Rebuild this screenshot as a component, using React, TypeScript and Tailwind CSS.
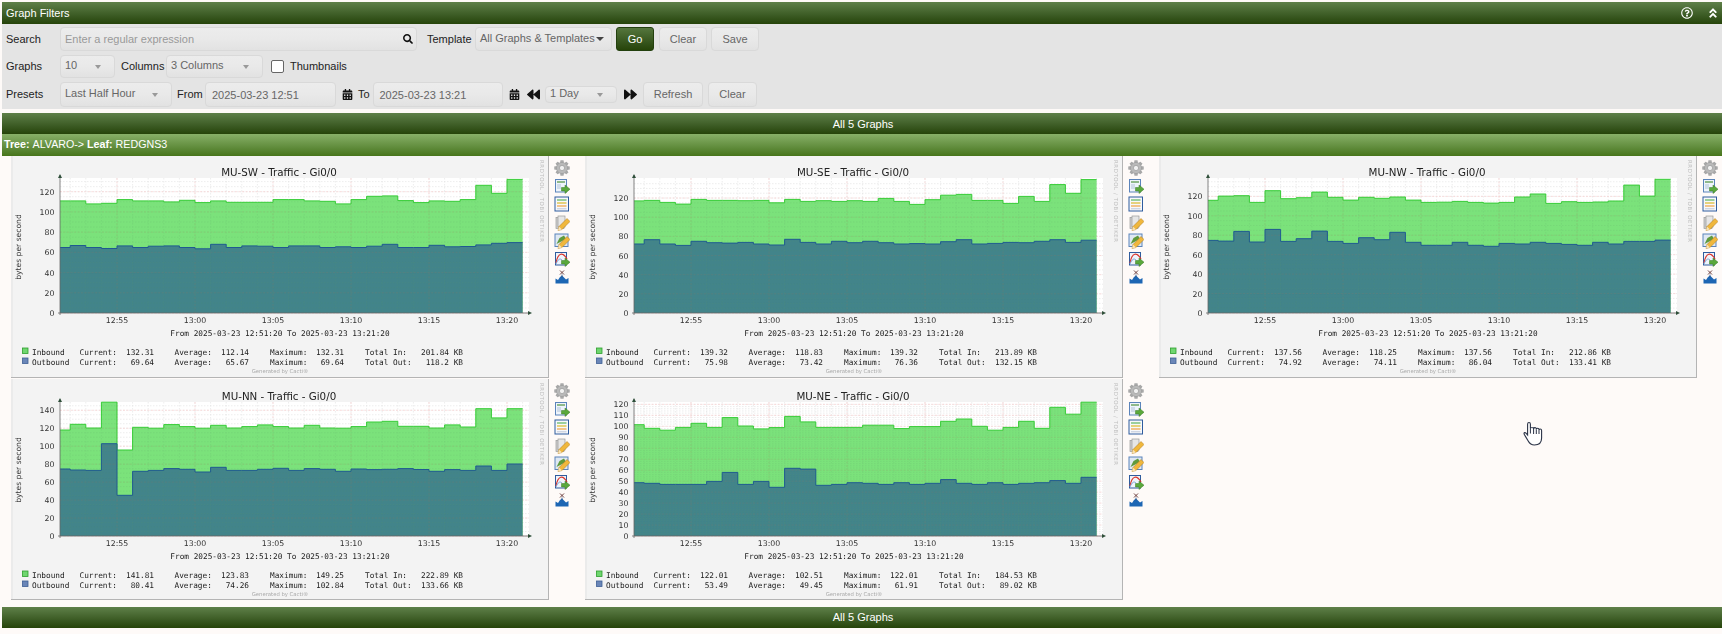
import React, { useId } from "react";
import { FaSearch, FaCalendarAlt, FaBackward, FaForward, FaRegQuestionCircle, FaAngleDoubleUp } from "react-icons/fa";

type G = {
  title: string; max: number; step: number; minor: number; scale: number; top: number;
  inb: number[]; out: number[];
  i: [string, string, string, string]; o: [string, string, string, string];
};

const graphs: G[] = [
  {
    title: "MU-SW - Traffic - Gi0/0", max: 133.6, step: 20, minor: 5, scale: 1.0108, top: 22,
    inb: [110.9,110.9,107.9,108.5,112.2,110.9,110.9,109.9,111.5,109.2,110.9,109.5,109.5,109.5,112.2,112.2,110.9,110.5,107.9,112.2,115.5,115.8,111.2,109.2,110.9,110.5,112.2,126.3,118.4,132.2],
    out: [64.8,66.8,64.8,63.8,66.4,64.8,66.1,66.4,64.8,63.5,68,64.8,66.4,66.1,64.8,66.4,66.4,64.8,65.5,64.8,66.1,68,64.8,64.8,67,65.5,65.8,67.4,69,69.6],
    i: ["132.31", "112.14", "132.31", "201.84 KB"], o: ["69.64", "65.67", "69.64", "118.2 KB"],
  },
  {
    title: "MU-SE - Traffic - Gi0/0", max: 140, step: 20, minor: 5, scale: 0.958, top: 22,
    inb: [117,117.5,115.5,113.7,118.6,117.5,117.5,117.2,117.5,115,118.6,116.5,117.2,116.5,117.2,116.5,119.6,116.5,113.4,118.3,123,123.8,117.5,117.5,114.4,121.7,116.5,134,124.9,139.3],
    out: [72,76.5,72,70.6,74.8,73.4,73,73.7,72,71,76.9,73.7,72,74.8,73.4,74.8,73.4,72,72.4,72,74.4,76.5,72,72.7,73.7,73.4,74.8,76.5,73.7,76],
    i: ["139.32", "118.83", "139.32", "213.89 KB"], o: ["75.98", "73.42", "76.36", "132.15 KB"],
  },
  {
    title: "MU-NW - Traffic - Gi0/0", max: 138, step: 20, minor: 5, scale: 0.972, top: 22,
    inb: [115.9,120.3,120.7,113.8,125.8,117.6,118.6,124.4,119,116.2,119,118,119.3,116.2,113.8,114,114.8,113.8,113.1,113.8,119.3,122.4,112.8,114.5,113.8,114.2,115.2,131.6,120.3,137.5],
    out: [74.7,74,84,73,86,73.7,76.4,84.3,73.7,71.6,77.5,75.4,83,72.7,69.6,69.6,72.7,69.6,68.6,71.6,71,72.7,71.6,70.6,69.6,72.7,71,73.7,73.7,75],
    i: ["137.56", "118.25", "137.56", "212.86 KB"], o: ["74.92", "74.11", "86.04", "133.41 KB"],
  },
  {
    title: "MU-NN - Traffic - Gi0/0", max: 150, step: 20, minor: 5, scale: 0.898, top: 23,
    inb: [118,124.4,120.3,149,95.8,121,120,124,121.8,120,123.3,120.3,121.8,123.7,121.8,120.3,123.3,120.3,120,121.8,127,127.7,122.2,122.2,120.3,123.7,121.4,141.8,131.5,141.8],
    out: [74.6,73.5,73,102.8,45.3,72,73,75,74.3,71.3,76.5,73,73,74.3,75.4,73,75,74.3,72,74.6,73.9,74.3,75,74,72,73.9,73,78,73,80.2],
    i: ["141.81", "123.83", "149.25", "222.89 KB"], o: ["80.41", "74.26", "102.84", "133.66 KB"],
  },
  {
    title: "MU-NE - Traffic - Gi0/0", max: 122, step: 10, minor: 2, scale: 1.097, top: 23,
    inb: [101.5,98.2,96.4,99,102.7,99,107.9,100.3,97.6,98.8,109,104,99,99,99,101,101,97.9,99.7,99.7,104.6,106.7,100,96.4,99,104.6,98.2,117.3,111,122],
    out: [48.6,48,47,47,47,49.8,58,47,49.8,44.4,61.7,61,46.2,47,48.6,48,47,48.6,47,48,51.4,48,47,48.6,47,48,48.6,50.5,48,53.5],
    i: ["122.01", "102.51", "122.01", "184.53 KB"], o: ["53.49", "49.45", "61.91", "89.02 KB"],
  },
];

const X0 = 49;
const BASE = 157;
const segX = (k: number) => (k === 0 ? X0 : 106 + (k - 4) * 15.6);

function stepPath(v: number[], scale: number) {
  let d = "";
  v.forEach((val, k) => {
    const y = (BASE - val * scale).toFixed(1);
    d += `${k === 0 ? "M" : "L"}${segX(k).toFixed(1)} ${y}L${segX(k + 1).toFixed(1)} ${y}`;
  });
  return d;
}

function Chart({ g }: { g: G }) {
  const clipId = useId();
  const line = stepPath(g.inb, g.scale);
  const oline = stepPath(g.out, g.scale);
  const end = segX(30).toFixed(1);
  const area = `${line}L${end} ${BASE}L${X0} ${BASE}Z`;
  const hMinor: number[] = [];
  for (let v = g.minor; v < g.max; v += g.minor) hMinor.push(v);
  const hMajor: number[] = [];
  for (let v = 0; v < g.max; v += g.step) hMajor.push(v);
  const ticks = ["12:55", "13:00", "13:05", "13:10", "13:15", "13:20"];
  const minutes: number[] = [];
  for (let k = 1; k <= 30; k++) minutes.push(segX(k));
  const cols = [["Current:", 68.5, 143], ["Average:", 163.5, 238], ["Maximum:", 259, 333]] as const;
  const rows = [
    { label: "Inbound", vals: g.i, tot: "Total In:", fill: "#6fd66f", stroke: "#2d9e2d", y: 198.5 },
    { label: "Outbound", vals: g.o, tot: "Total Out:", fill: "#6a86b8", stroke: "#3d5f95", y: 208.5 },
  ];
  const grid = (minorStroke: string, majorStroke: string) => (
    <g>
      {hMinor.map((v) => (
        <line key={v} x1={X0} x2={518} y1={BASE - v * g.scale} y2={BASE - v * g.scale} stroke={minorStroke} strokeWidth="0.6" strokeDasharray="1.5 1.5" />
      ))}
      {minutes.map((x) => (
        <line key={x} x1={x} x2={x} y1={g.top} y2={BASE} stroke={minorStroke} strokeWidth="0.6" strokeDasharray="1.5 1.5" />
      ))}
      {hMajor.map((v) => (
        <line key={v} x1={X0} x2={518} y1={BASE - v * g.scale} y2={BASE - v * g.scale} stroke={majorStroke} strokeWidth="0.7" strokeDasharray="2 1.5" />
      ))}
      {ticks.map((t, n) => (
        <line key={t} x1={106 + n * 78} x2={106 + n * 78} y1={g.top} y2={BASE} stroke={majorStroke} strokeWidth="0.7" strokeDasharray="2 1.5" />
      ))}
    </g>
  );
  return (
    <svg width="538" height="221" viewBox="0 0 538 221" className="block blur-[0.4px]">
      <defs>
        <clipPath id={clipId}>
          <path d={area} />
        </clipPath>
      </defs>
      <rect x={X0} y={g.top} width={469} height={BASE - g.top} fill="#ffffff" />
      {grid("#e0e0e0", "#f8d0d0")}
      <path d={area} fill="#7be27b" />
      <path d={`${oline}L${end} ${BASE}L${X0} ${BASE}Z`} fill="#42848a" />
      <g opacity="0.22" clipPath={`url(#${clipId})`}>{grid("#5f9a6a", "#b06a5a")}</g>
      <path d={line} fill="none" stroke="#36cc36" strokeWidth="1" />
      <path d={oline} fill="none" stroke="#1f5a90" strokeWidth="1" />
      <line x1={X0} x2={X0} y1={g.top - 3} y2={BASE + 2} stroke="#666" strokeWidth="0.8" />
      <line x1={X0 - 2} x2={519} y1={BASE} y2={BASE} stroke="#666" strokeWidth="0.8" />
      <path d={`M${X0 - 2} ${g.top}L${X0} ${g.top - 4}L${X0 + 2} ${g.top}Z`} fill="#2f4f3a" />
      <path d={`M517 ${BASE - 2}L521 ${BASE}L517 ${BASE + 2}Z`} fill="#2f4f3a" />
      <g className="font-['DejaVu_Sans']" fill="#333">
        <text x="268" y={g.top - 2.5} textAnchor="middle" fontSize="10.3" fill="#222">{g.title}</text>
        {hMajor.map((v) => (
          <text key={v} x="43.5" y={BASE - v * g.scale + 3} textAnchor="end" fontSize="7.8">{v}</text>
        ))}
        {ticks.map((t, n) => (
          <text key={t} x={106 + n * 78} y="167" textAnchor="middle" fontSize="7.8">{t}</text>
        ))}
        <text transform="translate(10 91) rotate(-90)" textAnchor="middle" fontSize="7.6">bytes per second</text>
        <text transform="translate(529 4) rotate(90)" fontSize="5.4" fill="#bdbdbd" letterSpacing="0.6">RRDTOOL / TOBI OETIKER</text>
        <text x="269" y="216.5" textAnchor="middle" fontSize="5.3" fill="#aaa">Generated by Cacti®</text>
      </g>
      <g className="font-['DejaVu_Sans_Mono']" fontSize="7.75" fill="#222">
        <text x="269" y="180" textAnchor="middle">From 2025-03-23 12:51:20 To 2025-03-23 13:21:20</text>
        {rows.map((r) => (
          <g key={r.label}>
            <rect x="11.5" y={r.y - 6.5} width="5.5" height="5.5" fill={r.fill} stroke={r.stroke} strokeWidth="0.8" />
            <text x="21" y={r.y}>{r.label}</text>
            {cols.map(([c, x, e], n) => (
              <g key={c}>
                <text x={x} y={r.y}>{c}</text>
                <text x={e} y={r.y} textAnchor="end">{r.vals[n]}</text>
              </g>
            ))}
            <text x="354" y={r.y}>{r.tot}</text>
            <text x="452" y={r.y} textAnchor="end">{r.vals[3]}</text>
          </g>
        ))}
      </g>
    </svg>
  );
}

function Gear() {
  const teeth = [0, 45, 90, 135, 180, 225, 270, 315];
  return (
    <svg width="16" height="16" viewBox="0 0 16 16">
      {teeth.map((a) => (
        <rect key={a} x="6.5" y="0.5" width="3" height="15" fill="#a9a9a9" transform={`rotate(${a} 8 8)`} />
      ))}
      <circle cx="8" cy="8" r="5.6" fill="#b9b9b9" stroke="#989898" strokeWidth="0.6" />
      <circle cx="8" cy="8" r="2.6" fill="#f1f1f1" stroke="#8f8f8f" strokeWidth="0.6" />
    </svg>
  );
}
function Arrow() {
  return <path d="M7.5 9.5h3.5V7L16 11.2 11 15.5V13H7.5z" fill="#5aa83c" stroke="#3b7a26" strokeWidth="0.5" />;
}
function Pencil() {
  return (
    <g>
      <path d="M4 15.5L5 11.5 13 3.5 16 6.5 8 14.5z" fill="#f0b73c" stroke="#a9741a" strokeWidth="0.5" />
      <path d="M4 15.5L5 11.5 8 14.5z" fill="#f6e2b8" />
    </g>
  );
}
function IconBox({ children }: { children: React.ReactNode }) {
  return <svg width="16" height="16" viewBox="0 0 16 16">{children}</svg>;
}
const sideIcons = [
  <Gear key="a" />,
  <IconBox key="b">
    <rect x="1.5" y="1.5" width="11" height="12.5" fill="#eef4fb" stroke="#5b84bb" />
    <rect x="3" y="3" width="8" height="2" fill="#8fb98a" />
    <rect x="3" y="6" width="4" height="5" fill="#cfdbe9" />
    <Arrow />
  </IconBox>,
  <IconBox key="c">
    <rect x="1" y="1" width="13.5" height="14" fill="#f7f8fb" stroke="#2f5c9e" />
    <rect x="3" y="3" width="9.5" height="2" fill="#9ccf9c" />
    <rect x="3" y="6" width="9.5" height="2" fill="#e6d27c" />
    <rect x="3" y="9" width="9.5" height="2" fill="#f2c48c" />
    <rect x="3" y="12" width="9.5" height="1.4" fill="#cfd5e2" />
  </IconBox>,
  <IconBox key="d">
    <rect x="2" y="2.5" width="8" height="11" fill="#cfcfcf" stroke="#999" strokeWidth="0.7" />
    <rect x="4" y="1" width="7" height="11" fill="#e6e6e6" stroke="#999" strokeWidth="0.7" />
    <Pencil />
  </IconBox>,
  <IconBox key="e">
    <rect x="1" y="1" width="13" height="12.5" fill="#dfe8f3" stroke="#5b84bb" />
    <path d="M2.5 11L5.5 5 10 2.5 12 6z" fill="#5f9a3c" />
    <Pencil />
  </IconBox>,
  <IconBox key="f">
    <rect x="1.5" y="1.5" width="11" height="12.5" fill="#eef4fb" stroke="#2f5c9e" />
    <path d="M2 12C4 1 9 1 13 8" fill="none" stroke="#d8342c" strokeWidth="1.2" />
    <path d="M2 13C4 8 6 7 8 9" fill="none" stroke="#7fa4d6" strokeWidth="1" />
    <Arrow />
  </IconBox>,
  <IconBox key="g">
    <path d="M1.5 14.5V9.5L4 11 6 8 8 6.5 10 8.5 12 10.5 14.5 9V14.5z" fill="#1d66b4" />
    <path d="M6 1.5L10 5.5M10 1.5L6 5.5" stroke="#5d2a2a" strokeWidth="0.9" />
    <path d="M8 5.5v3" stroke="#30558a" strokeWidth="0.8" />
  </IconBox>,
];

function Cell({ g, h }: { g: G; h: string }) {
  return (
    <div className="flex w-[574px] shrink-0">
      <div className={`w-[538px] ${h} bg-[#f3f3f3] border-r border-b border-[#b4b4b4] shadow-[inset_2px_0_0_#ebebeb] shrink-0 overflow-hidden`}>
        <Chart g={g} />
      </div>
      <div className="ml-[5px] pt-[4px] flex flex-col gap-[2.2px] blur-[0.3px]">
        {sideIcons.map((ic, n) => (
          <div key={n} className="w-[16px] h-[16px]">{ic}</div>
        ))}
      </div>
    </div>
  );
}

function Bar({ children }: { children: React.ReactNode }) {
  return (
    <div className="ml-[2px] pl-[2px] pt-[1px] h-[21px] flex items-center justify-center text-white text-[11px] bg-linear-to-b from-[#5f8049] to-[#264409]">
      {children}
    </div>
  );
}

const fieldCls = "h-full rounded-[4px] border border-[#d9d9d9] bg-linear-to-b from-[#ececec] via-[#e9e9e9] to-[#e2e2e2] text-[#666] text-[11px] flex items-center";

function Sel({ w, label, caret }: { w: string; label: string; caret?: boolean }) {
  return (
    <div className={`${w} ${fieldCls} justify-between pl-[4px] pr-[7px] h-[22px] shrink-0 relative`}>
      <span className="-mt-[2px] whitespace-nowrap">{label}</span>
      {caret ? (
        <span className="w-0 h-0 border-l-[4px] border-r-[4px] border-t-[4px] border-l-transparent border-r-transparent border-t-[#444]" />
      ) : (
        <span className="w-0 h-0 border-l-[3px] border-r-[3px] border-t-[4px] border-l-transparent border-r-transparent border-t-[#999] mr-[6px]" />
      )}
    </div>
  );
}

function Btn({ w, label }: { w: string; label: string }) {
  return (
    <div className={`${w} ${fieldCls} justify-center h-[23px] shrink-0`}>{label}</div>
  );
}

function Hand() {
  return (
    <svg width="20" height="25" viewBox="0 0 20 25" className="absolute left-[1523px] top-[421px]">
      <path
        d="M6 1.5C5 1.5 4.6 2.3 4.6 3.2V14L3 12.2C2 11.2 1 11.6 1 12.6C1 13.2 1.4 13.8 2 14.6L5.2 20C6.6 22.6 8.5 24 11.4 24C15.6 24 18.6 21.6 18.6 17V9.4C18.6 8.5 18 8 17.2 8C16.5 8 16 8.5 16 9.4V8.6C16 7.7 15.3 7.2 14.6 7.2C13.9 7.2 13.3 7.7 13.3 8.6V8C13.3 7.1 12.6 6.6 11.9 6.6C11.1 6.6 10.6 7.1 10.6 8V6.8L7.4 6.6V3.2C7.4 2.3 7 1.5 6 1.5Z"
        fill="#ffffff"
        stroke="#2b3347"
        strokeWidth="1.1"
      />
      <path d="M7.4 6.6V12.5M10.6 8V13M13.3 8.6V13M16 9.4V13" fill="none" stroke="#2b3347" strokeWidth="1" />
    </svg>
  );
}

export default function App() {
  return (
    <div className="relative w-[1722px] h-[634px] overflow-hidden bg-[#fefaf8] font-['Liberation_Sans',sans-serif] pt-[2px]">
      <div className="ml-[2px] h-[22px] flex items-center justify-between pl-[4px] pr-[3px] text-white text-[11px] bg-linear-to-b from-[#5f8049] to-[#264409]">
        <span>Graph Filters</span>
        <div className="flex items-center">
          <FaRegQuestionCircle className="text-[12px] text-white" />
          <FaAngleDoubleUp className="text-[12px] text-white ml-[14px]" />
        </div>
      </div>

      <div className="ml-[2px] h-[85px] bg-[#e4e4e4] pl-[4px] pt-[3px] text-[11px] text-[#222]">
        <div className="flex items-center h-[24px]">
          <span className="w-[54px] shrink-0">Search</span>
          <div className={`w-[357px] ${fieldCls} relative shrink-0`}>
            <input
              placeholder="Enter a regular expression"
              className="w-full h-full bg-transparent px-[4px] text-[11px] outline-none placeholder:text-[#999]"
            />
            <FaSearch className="absolute right-[3px] top-[6px] text-[10px] text-[#111]" />
          </div>
          <span className="ml-[10px] w-[48px] shrink-0">Template</span>
          <Sel w="w-[137px]" label="All Graphs & Templates" caret />
          <div className="ml-[4px] w-[38px] h-[24px] rounded-[3px] border border-[#23400e] bg-linear-to-b from-[#55763d] to-[#264409] text-white text-[11px] flex items-center justify-center shrink-0">Go</div>
          <Btn w="ml-[5px] w-[48px]" label="Clear" />
          <Btn w="ml-[4px] w-[48px]" label="Save" />
        </div>
        <div className="flex items-center h-[23px] mt-[4px]">
          <span className="w-[54px] shrink-0">Graphs</span>
          <Sel w="w-[55px]" label="10" />
          <span className="ml-[6px] w-[45px] shrink-0">Columns</span>
          <Sel w="w-[97px]" label="3 Columns" />
          <span className="ml-[8px] w-[13px] h-[13px] rounded-[2px] border border-[#666] bg-white shrink-0" />
          <span className="ml-[6px]">Thumbnails</span>
        </div>
        <div className="flex items-center h-[25px] mt-[4px]">
          <span className="w-[54px] shrink-0">Presets</span>
          <Sel w="w-[112px]" label="Last Half Hour" />
          <span className="ml-[5px] w-[28px] shrink-0">From</span>
          <div className={`w-[131px] ${fieldCls} pl-[6px] pt-[2px] shrink-0`}>2025-03-23 12:51</div>
          <FaCalendarAlt className="ml-[6px] text-[11px] text-[#111] shrink-0" />
          <span className="ml-[5px] w-[14.5px] shrink-0">To</span>
          <div className={`w-[130px] ${fieldCls} pl-[6px] pt-[2px] shrink-0`}>2025-03-23 13:21</div>
          <FaCalendarAlt className="ml-[6.5px] text-[11px] text-[#111] shrink-0" />
          <FaBackward className="ml-[7px] text-[13px] text-[#111] shrink-0" />
          <div className="ml-[5px] shrink-0"><Sel w="w-[72px]" label="1 Day" /></div>
          <FaForward className="ml-[7px] text-[13px] text-[#111] shrink-0" />
          <Btn w="ml-[6px] w-[60px]" label="Refresh" />
          <Btn w="ml-[5px] w-[49px]" label="Clear" />
        </div>
      </div>

      <div className="mt-[4px]">
        <Bar>All 5 Graphs</Bar>
      </div>
      <div className="ml-[2px] h-[22px] flex items-center pl-[2px] pb-[1px] text-white text-[10.7px] bg-linear-to-b from-[#88b068] to-[#47751a]">
        <b>Tree:</b>&nbsp;ALVARO-&gt;&nbsp;<b>Leaf:</b>&nbsp;REDGNS3
      </div>

      <div className="pl-[11px]">
        <div className="flex">
          <Cell g={graphs[0]} h="h-[222px]" />
          <Cell g={graphs[1]} h="h-[222px]" />
          <Cell g={graphs[2]} h="h-[222px]" />
        </div>
        <div className="flex mt-[1px]">
          <Cell g={graphs[3]} h="h-[221px]" />
          <Cell g={graphs[4]} h="h-[221px]" />
        </div>
      </div>

      <div className="mt-[6.5px]">
        <Bar>All 5 Graphs</Bar>
      </div>
      <Hand />
    </div>
  );
}
